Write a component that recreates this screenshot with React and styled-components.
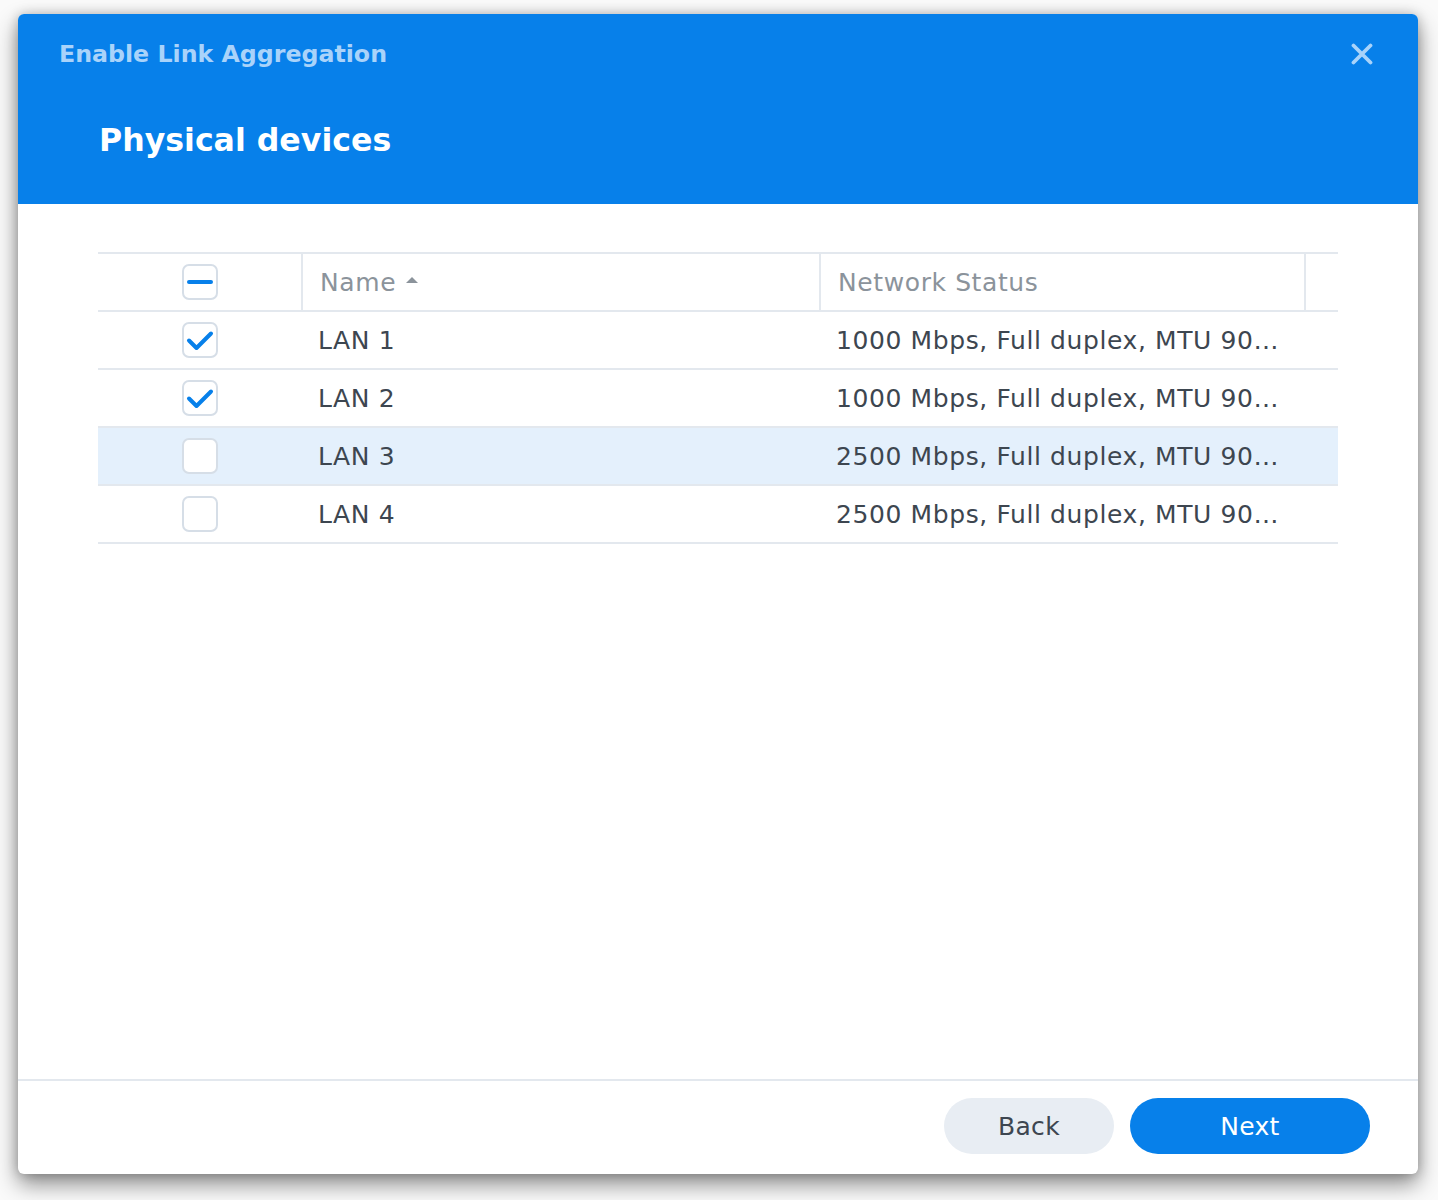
import React from "react";
import styled, { createGlobalStyle } from "styled-components";

const Global = createGlobalStyle`
  html, body { margin: 0; padding: 0; background: #ffffff; }
  body { font-family: "DejaVu Sans", Verdana, sans-serif; }
  * { box-sizing: border-box; }
`;

const Page = styled.div`
  width: 1438px;
  height: 1200px;
  padding: 14px 20px 26px 18px;
  background: #fafafa;
`;

const Dialog = styled.div`
  width: 1400px;
  height: 1160px;
  background: #fff;
  border-radius: 6px;
  overflow: hidden;
  display: flex;
  flex-direction: column;
  box-shadow: 0 10px 22px rgba(0, 0, 0, 0.45), 0 0 12px rgba(0, 0, 0, 0.2);
`;

const Header = styled.div`
  height: 190px;
  background: #0780ea;
  display: flex;
  flex-direction: column;
  padding: 26px 43px 0 41px;
`;

const TopBar = styled.div`
  display: flex;
  align-items: center;
  justify-content: space-between;
  height: 28px;
`;

const WindowTitle = styled.div`
  font-size: 23.7px;
  font-weight: bold;
  color: #a9d3fa;
`;

const Close = styled.button`
  border: none;
  background: transparent;
  padding: 0;
  width: 26px;
  height: 28px;
  display: flex;
  align-items: center;
  justify-content: center;
  cursor: pointer;
`;

const PageTitle = styled.h1`
  margin: 52px 0 0 40px;
  font-size: 31.6px;
  font-weight: bold;
  color: #fff;
  line-height: 40px;
`;

const Body = styled.div`
  flex: 1;
  padding: 48px 80px 0 80px;
`;

const Table = styled.div`
  width: 1240px;
  border-top: 2px solid #e3e8ee;
`;

const Row = styled.div`
  display: grid;
  grid-template-columns: 203px 518px 485px 34px;
  height: 58px;
  border-bottom: 2px solid #e3e8ee;
  background: ${(p) => (p.$selected ? "#e4f0fc" : "#fff")};
  align-items: center;
`;

const Cell = styled.div`
  height: 100%;
  display: flex;
  align-items: center;
  padding: 0 12px 0 17px;
  font-size: 25px;
  letter-spacing: 0.6px;
  color: ${(p) => (p.$head ? "#8b939b" : "#3d4650")};
  border-left: ${(p) => (p.$divider ? "2px solid #e3e8ee" : "none")};
  min-width: 0;
  white-space: nowrap;
`;

const CheckCell = styled.div`
  display: flex;
  align-items: center;
  justify-content: center;
  height: 100%;
  padding-left: 1px;
`;

const Text = styled.span`
  overflow: hidden;
  text-overflow: ellipsis;
  white-space: nowrap;
`;

const Box = styled.div`
  width: 36px;
  height: 36px;
  border: 2px solid #d6dee7;
  border-radius: 7px;
  background: #fff;
  display: flex;
  align-items: center;
  justify-content: center;
`;

const SortArrow = styled.span`
  display: inline-block;
  width: 0;
  height: 0;
  margin-left: 10px;
  border-left: 6px solid transparent;
  border-right: 6px solid transparent;
  border-bottom: 6px solid #8b939b;
  position: relative;
  top: -2px;
`;

const Footer = styled.div`
  height: 95px;
  border-top: 2px solid #e3e8ee;
  display: flex;
  align-items: flex-start;
  justify-content: flex-end;
  gap: 16px;
  padding: 17px 48px 0 0;
`;

const Button = styled.button`
  height: 56px;
  width: ${(p) => p.$w}px;
  border: none;
  border-radius: 28px;
  font-family: "DejaVu Sans", Verdana, sans-serif;
  font-size: 25px;
  letter-spacing: 0.3px;
  background: ${(p) => (p.$primary ? "#0780ea" : "#e8edf3")};
  color: ${(p) => (p.$primary ? "#fff" : "#3d4650")};
  cursor: pointer;
`;

const Check = ({ state }) => (
  <Box>
    {state === "checked" && (
      <svg width="32" height="32" viewBox="0 0 32 32">
        <path d="M5 16.5 L12.5 24 L27 9.5" fill="none" stroke="#0780ea" strokeWidth="4" strokeLinecap="round" strokeLinejoin="round" />
      </svg>
    )}
    {state === "partial" && (
      <svg width="32" height="32" viewBox="0 0 32 32">
        <path d="M5 16 L27 16" fill="none" stroke="#0780ea" strokeWidth="4" strokeLinecap="round" />
      </svg>
    )}
  </Box>
);

const rows = [
  { name: "LAN 1", status: "1000 Mbps, Full duplex, MTU 90…", checked: true },
  { name: "LAN 2", status: "1000 Mbps, Full duplex, MTU 90…", checked: true },
  { name: "LAN 3", status: "2500 Mbps, Full duplex, MTU 90…", checked: false, selected: true },
  { name: "LAN 4", status: "2500 Mbps, Full duplex, MTU 90…", checked: false },
];

export default function App() {
  return (
    <>
      <Global />
      <Page>
        <Dialog>
          <Header>
            <TopBar>
              <WindowTitle>Enable Link Aggregation</WindowTitle>
              <Close aria-label="Close">
                <svg width="22" height="22" viewBox="0 0 22 22">
                  <path d="M2.5 2.5 L19.5 19.5 M19.5 2.5 L2.5 19.5" stroke="#a9d3fa" strokeWidth="3.8" strokeLinecap="round" />
                </svg>
              </Close>
            </TopBar>
            <PageTitle>Physical devices</PageTitle>
          </Header>
          <Body>
            <Table>
              <Row>
                <CheckCell>
                  <Check state="partial" />
                </CheckCell>
                <Cell $head $divider>
                  Name<SortArrow />
                </Cell>
                <Cell $head $divider>
                  Network Status
                </Cell>
                <Cell $head $divider />
              </Row>
              {rows.map((r) => (
                <Row key={r.name} $selected={r.selected}>
                  <CheckCell>
                    <Check state={r.checked ? "checked" : "none"} />
                  </CheckCell>
                  <Cell>
                    <Text>{r.name}</Text>
                  </Cell>
                  <Cell>
                    <Text>{r.status}</Text>
                  </Cell>
                  <Cell />
                </Row>
              ))}
            </Table>
          </Body>
          <Footer>
            <Button $w={170}>Back</Button>
            <Button $w={240} $primary>
              Next
            </Button>
          </Footer>
        </Dialog>
      </Page>
    </>
  );
}
